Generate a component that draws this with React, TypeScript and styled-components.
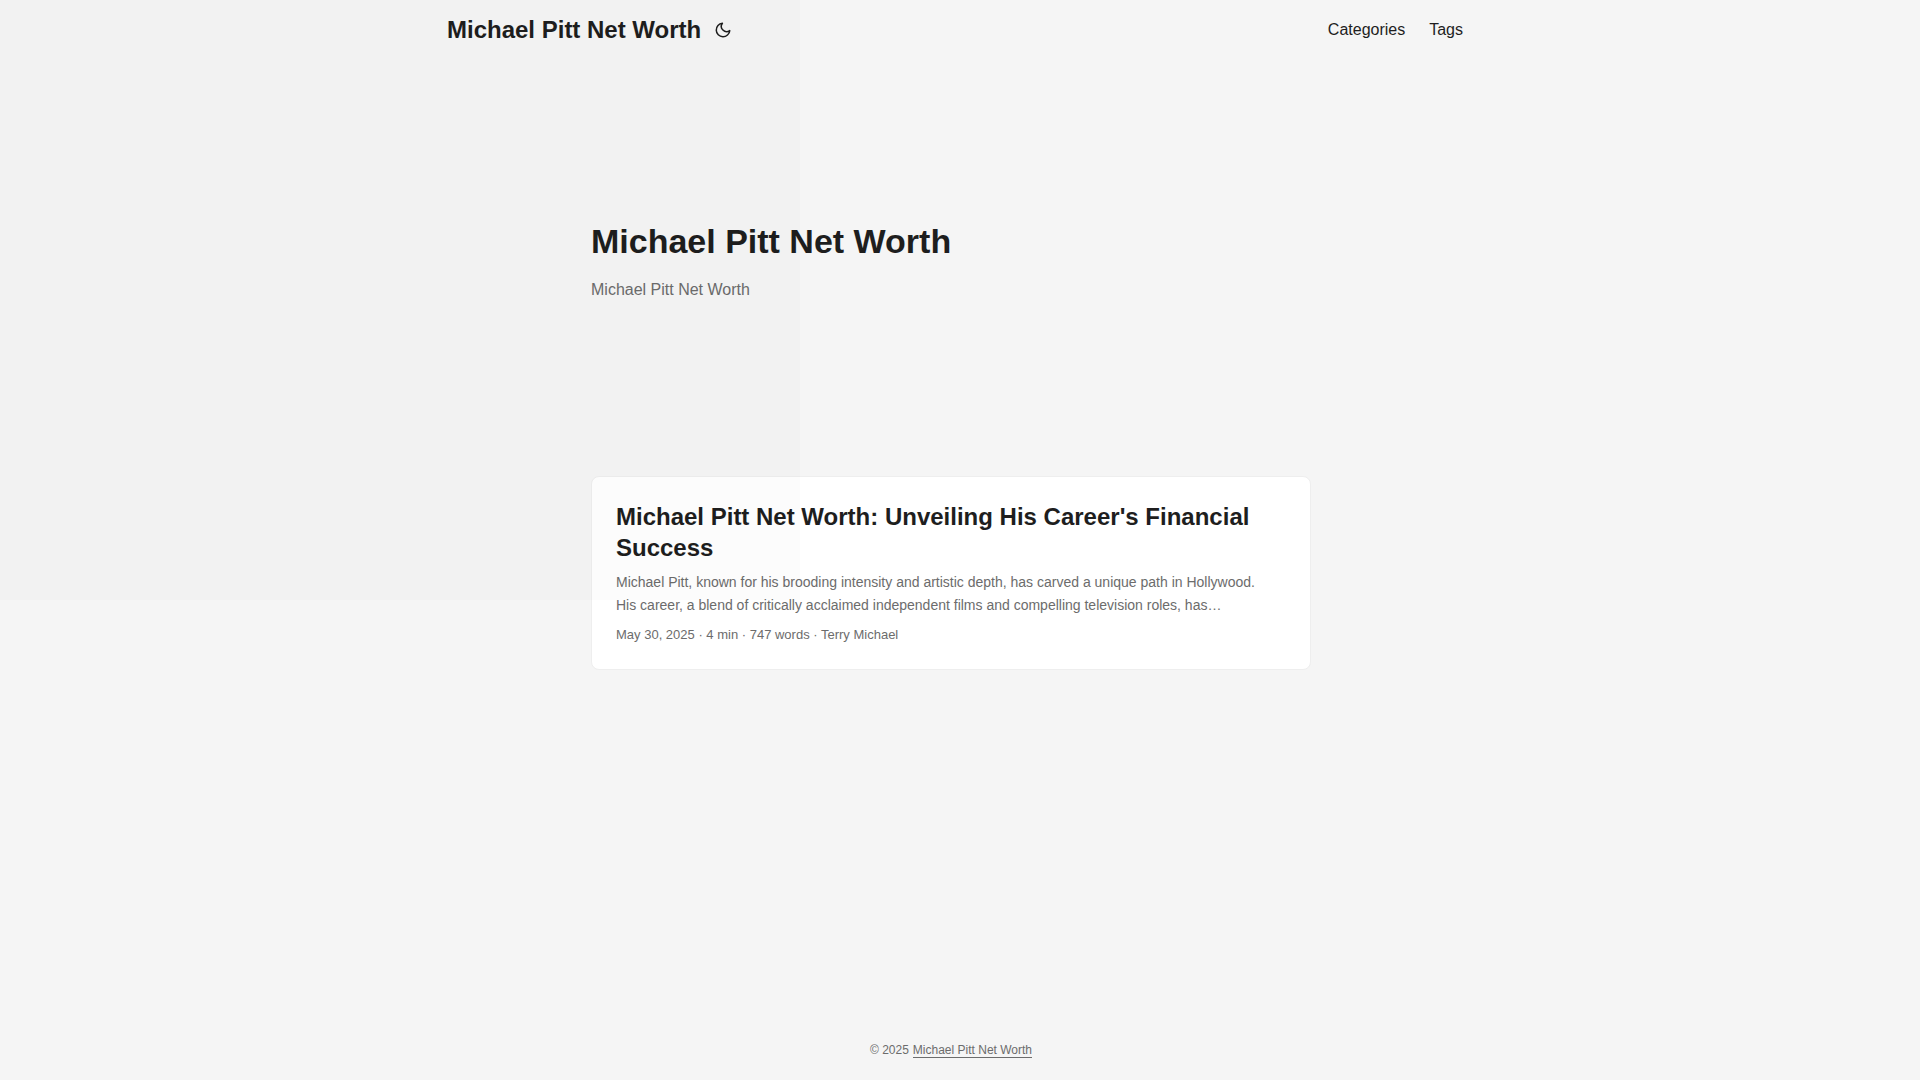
import React, { useState } from "react";
import styled, { createGlobalStyle } from "styled-components";

const color = {
  page: "#f5f5f5",
  entry: "#ffffff",
  primary: "#1e1e1e",
  secondary: "#6c6c6c",
  border: "#eeeeee",
};

const GlobalStyle = createGlobalStyle`
  *, *::before, *::after { box-sizing: border-box; }
  body {
    margin: 0;
    background: ${color.page};
    color: ${color.primary};
    font-family: "Liberation Sans", Arial, sans-serif;
    font-size: 16px;
    line-height: 26px;
  }
  h1, h2, p { margin: 0; }
  a { color: inherit; text-decoration: none; }
`;

const Page = styled.div`
  display: flex;
  flex-direction: column;
  min-height: 100vh;
  padding-right: 18px;
`;

const Shade = styled.div`
  position: absolute;
  top: 0;
  left: 0;
  width: 800px;
  height: 600px;
  max-width: 100%;
  background: rgba(0, 0, 0, 0.012);
  pointer-events: none;
`;

const Nav = styled.nav`
  display: flex;
  flex-wrap: wrap;
  align-items: center;
  justify-content: space-between;
  width: 100%;
  max-width: 1072px;
  min-height: 60px;
  margin: 0 auto;
  padding: 0 24px 0 32px;
`;

const Brand = styled.div`
  display: flex;
  align-items: center;
  gap: 13px;
`;

const BrandLink = styled.a`
  font-size: 24px;
  font-weight: 700;
`;

const ThemeButton = styled.button`
  display: flex;
  padding: 0;
  border: 0;
  background: none;
  color: inherit;
  cursor: pointer;
`;

const Menu = styled.ul`
  display: flex;
  gap: 24px;
  margin: 0;
  padding: 0;
  list-style: none;
`;

const Main = styled.main`
  flex: 1;
  width: 100%;
  max-width: 768px;
  margin: 0 auto;
  padding: 24px;
`;

const Hero = styled.section`
  display: flex;
  flex-direction: column;
  justify-content: center;
  gap: 14px;
  min-height: 354px;
  margin-bottom: 38px;
`;

const HeroTitle = styled.h1`
  font-size: 34px;
  line-height: 44px;
`;

const HeroText = styled.p`
  color: ${color.secondary};
`;

const Entry = styled.article`
  padding: 24px;
  background: ${color.entry};
  border: 1px solid ${color.border};
  border-radius: 8px;
`;

const EntryTitle = styled.h2`
  font-size: 24px;
  line-height: 31px;
`;

const EntrySummary = styled.p`
  margin: 8px 0 7px;
  color: ${color.secondary};
  font-size: 14px;
  line-height: 23px;
`;

const EntryMeta = styled.p`
  color: ${color.secondary};
  font-size: 13px;
  line-height: 21px;
`;

const Footer = styled.footer`
  display: flex;
  align-items: center;
  justify-content: center;
  gap: 4px;
  min-height: 60px;
  color: ${color.secondary};
  font-size: 12px;
  line-height: 14px;
`;

const FooterLink = styled.a`
  border-bottom: 1px solid ${color.secondary};
`;

function MoonIcon() {
  return (
    <svg
      width="18"
      height="18"
      viewBox="0 0 24 24"
      fill="none"
      stroke="currentColor"
      strokeWidth="2"
      strokeLinecap="round"
      strokeLinejoin="round"
      aria-hidden="true"
    >
      <path d="M21 12.79A9 9 0 1 1 11.21 3 7 7 0 0 0 21 12.79z" />
    </svg>
  );
}

const menuItems = ["Categories", "Tags"];
const meta = ["May 30, 2025", "4 min", "747 words", "Terry Michael"];

export default function App() {
  const [dark, setDark] = useState(false);

  return (
    <Page>
      <GlobalStyle />
      <header>
        <Nav>
          <Brand>
            <BrandLink href="#">Michael Pitt Net Worth</BrandLink>
            <ThemeButton
              type="button"
              aria-label="Toggle theme"
              aria-pressed={dark}
              onClick={() => setDark(!dark)}
            >
              <MoonIcon />
            </ThemeButton>
          </Brand>
          <Menu>
            {menuItems.map((item) => (
              <li key={item}>
                <a href={`#${item.toLowerCase()}`}>{item}</a>
              </li>
            ))}
          </Menu>
        </Nav>
      </header>
      <Main>
        <Hero>
          <HeroTitle>Michael Pitt Net Worth</HeroTitle>
          <HeroText>Michael Pitt Net Worth</HeroText>
        </Hero>
        <Entry>
          <EntryTitle>
            <a href="#entry">Michael Pitt Net Worth: Unveiling His Career's Financial Success</a>
          </EntryTitle>
          <EntrySummary>
            Michael Pitt, known for his brooding intensity and artistic depth, has carved a unique
            path in Hollywood.
            <br />
            His career, a blend of critically acclaimed independent films and compelling television
            roles, has…
          </EntrySummary>
          <EntryMeta>{meta.join(" · ")}</EntryMeta>
        </Entry>
      </Main>
      <Footer>
        <span>© 2025</span>
        <FooterLink href="#">Michael Pitt Net Worth</FooterLink>
      </Footer>
      <Shade />
    </Page>
  );
}
